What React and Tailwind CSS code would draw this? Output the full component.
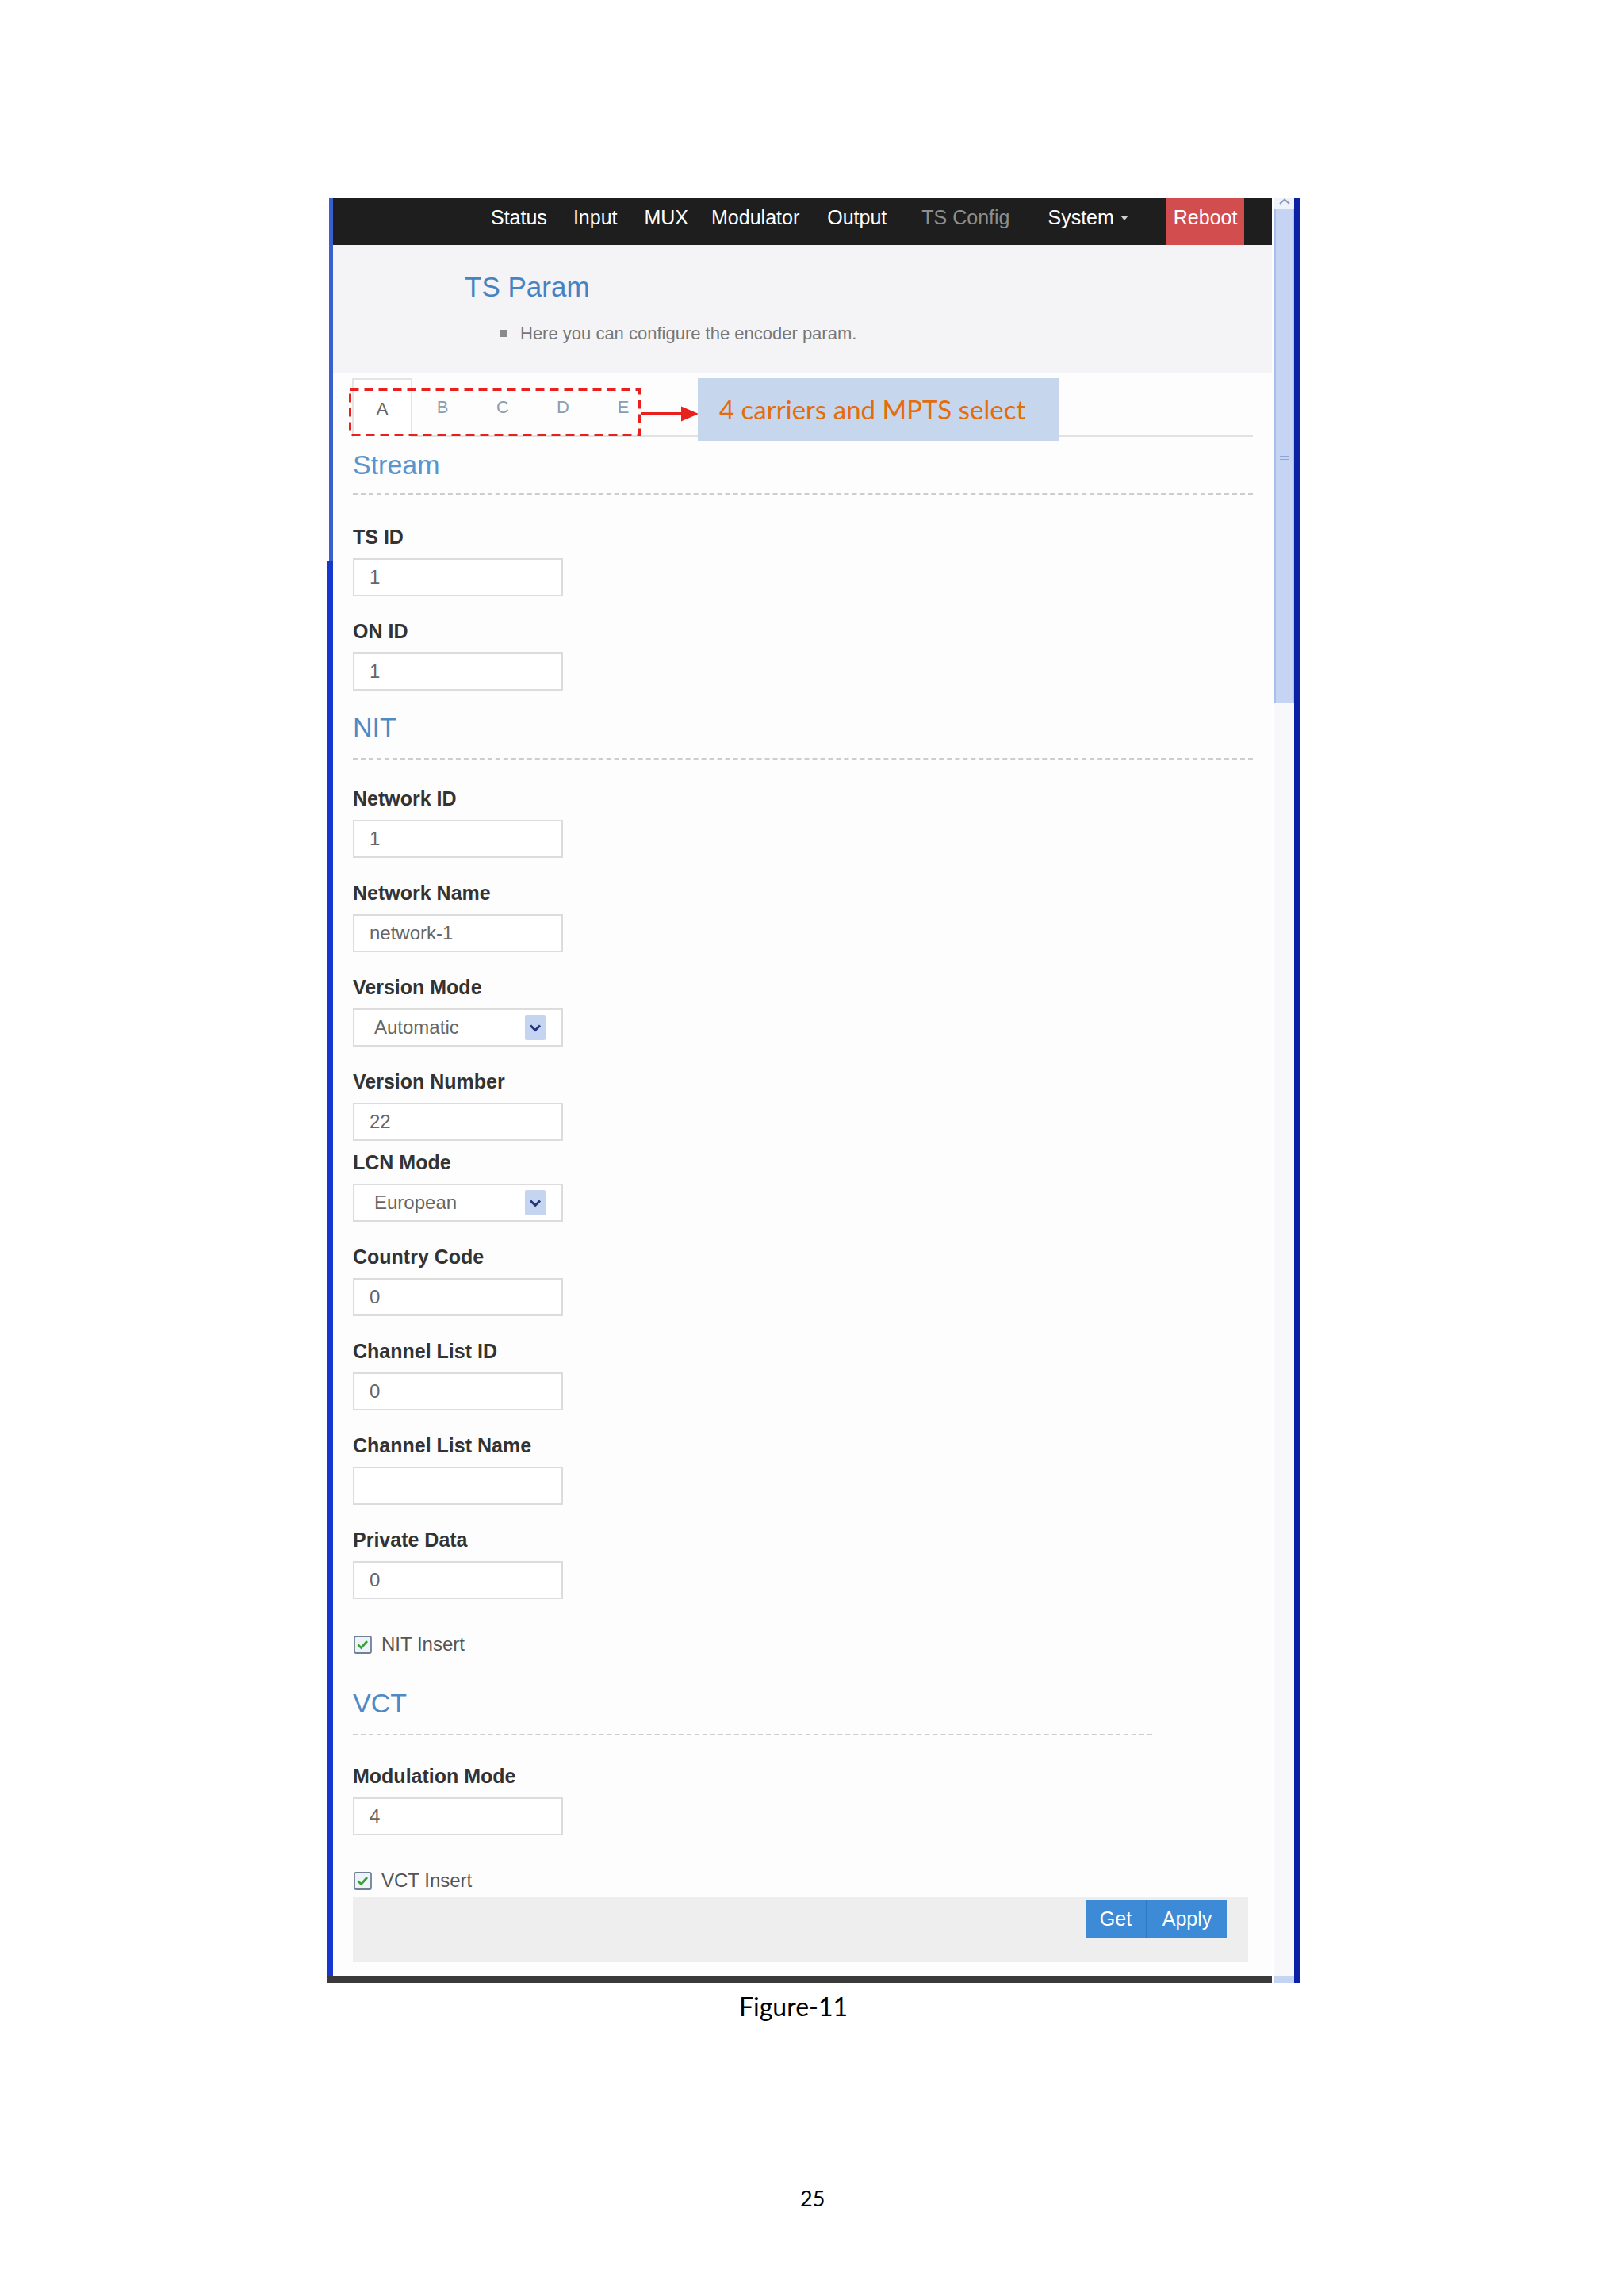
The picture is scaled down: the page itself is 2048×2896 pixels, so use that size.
import React from 'react'

const navItems = [
  { label: 'Status', cls: 'ml-0 text-white' },
  { label: 'Input', cls: 'ml-[33px] text-white' },
  { label: 'MUX', cls: 'ml-[34px] text-white' },
  { label: 'Modulator', cls: 'ml-[29px] text-white' },
  { label: 'Output', cls: 'ml-[35px] text-white' },
  { label: 'TS Config', cls: 'ml-[44px] text-[#8d8d8d]' },
]

function Chevron() {
  return (
    <svg width="16" height="11" viewBox="0 0 16 11">
      <path d="M2 2.5 L8 8.5 L14 2.5" fill="none" stroke="#23357a" strokeWidth="3" />
    </svg>
  )
}

function CheckBox() {
  return (
    <svg width="23" height="23" viewBox="0 0 23 23">
      <rect x="1" y="1" width="21" height="21" rx="2" fill="#eef3f8" stroke="#6f8097" strokeWidth="1.8" />
      <path d="M5.5 11.5 L9.5 15.5 L17 7" fill="none" stroke="#3aa13a" strokeWidth="2.8" />
    </svg>
  )
}

function Field({ label, value, select, gap = 'mb-[29px]' }) {
  return (
    <div className={gap}>
      <div className="h-[30px] text-[25px] leading-[30px] font-bold text-[#333]">{label}</div>
      {select ? (
        <div className="mt-[12px] flex h-[48px] w-[265px] items-center justify-between border-2 border-[#dcdcdc] bg-white pl-[25px] pr-[20px] text-[24px] text-[#666]">
          <span>{value}</span>
          <span className="flex h-[32px] w-[26px] items-center justify-center rounded-[2px] bg-[#c5d4f0]">
            <Chevron />
          </span>
        </div>
      ) : (
        <div className="mt-[12px] flex h-[48px] w-[265px] items-center border-2 border-[#dcdcdc] bg-white pl-[19px] text-[24px] text-[#666]">
          {value}
        </div>
      )}
    </div>
  )
}

function SectionTitle({ children, cls }) {
  return <div className={`h-[40px] text-[34px] leading-[40px] text-[#4d8ac6] ${cls}`}>{children}</div>
}

function Check({ label, cls }) {
  return (
    <div className={`flex h-[30px] items-center gap-[12px] pl-[1px] text-[24px] text-[#555] ${cls}`}>
      <CheckBox />
      <span>{label}</span>
    </div>
  )
}

export default function App() {
  return (
    <div className="relative h-[2896px] w-[2048px] bg-white font-['Liberation_Sans',Arial,sans-serif]">
      <div className="flex pl-[412px] pt-[250px]">
        {/* screenshot frame */}
        <div className="flex w-[1192px] flex-col">
          <div className="flex">
            <div className="flex w-[8px] flex-col">
              <div className="ml-[3px] h-[457px] w-[5px] bg-[#3a5fcf]" />
              <div className="flex-1 bg-[#1637cf]" />
            </div>
            <div className="w-[1184px] bg-[#fdfdfd] pb-[18px]">
              {/* top nav */}
              <div className="flex h-[59px] items-stretch bg-[#1e1e1e] pl-[199px] text-[25px]">
                {navItems.map((n) => (
                  <span key={n.label} className={`flex items-center pb-[10px] ${n.cls}`}>{n.label}</span>
                ))}
                <span className="ml-[48px] flex items-center pb-[10px] text-white">
                  System
                  <svg className="ml-[8px]" width="10" height="6" viewBox="0 0 10 6">
                    <path d="M0 0 H10 L5 6 Z" fill="#cfcfcf" />
                  </svg>
                </span>
                <span className="ml-[48px] flex items-center bg-[#d24d4d] px-[9px] pb-[10px] text-white">Reboot</span>
              </div>

              {/* page header */}
              <div className="h-[162px] bg-[#f4f4f6] pl-[166px] pt-[33px]">
                <div className="h-[40px] text-[35px] leading-[40px] text-[#4583c2]">TS Param</div>
                <div className="mt-[23px] flex h-[30px] items-center pl-[44px] text-[22px] text-[#777]">
                  <span className="mr-[17px] h-[9px] w-[9px] bg-[#8a8a8a]" />
                  Here you can configure the encoder param.
                </div>
              </div>

              <div className="pl-[25px] pr-[24px]">
                {/* tabs */}
                <div className="relative mt-[6px] flex h-[74px] border-b-2 border-[#e2e2e2]">
                  {['A', 'B', 'C', 'D', 'E'].map((t, i) => (
                    <div
                      key={t}
                      className={
                        i === 0
                          ? '-ml-[1px] -mb-[2px] flex w-[76px] items-center justify-center border-2 border-b-0 border-[#e4e4e4] bg-white text-[22px] text-[#666]'
                          : 'flex w-[76px] items-center justify-center text-[22px] text-[#8c9db2]'
                      }
                    >
                      {t}
                    </div>
                  ))}
                  <svg className="absolute left-[-5px] top-[13px]" width="368" height="60" viewBox="0 0 368 60">
                    <rect x="1.5" y="1.5" width="365" height="57" fill="none" stroke="#e8211f" strokeWidth="3" strokeDasharray="11 7" />
                  </svg>
                  <svg className="absolute left-[363px] top-[35px]" width="74" height="20" viewBox="0 0 74 20">
                    <path d="M0 10 H54" stroke="#e8211f" strokeWidth="4" />
                    <path d="M51 0.5 L73 10 L51 19.5 Z" fill="#e8211f" />
                  </svg>
                  <div className="absolute left-[435px] top-0 flex h-[79px] w-[455px] items-center bg-[#c6d6ec] pl-[27px] font-['Lato',sans-serif] text-[33px] text-[#e46c0a]">
                    4 carriers and MPTS select
                  </div>
                </div>

                {/* Stream */}
                <SectionTitle cls="mt-[15px] text-[#5a95cb]">Stream</SectionTitle>
                <div className="mt-[16px] border-t-2 border-dashed border-[#cdcdcd]" />
                <div className="mt-[38px]">
                  <Field label="TS ID" value="1" />
                  <Field label="ON ID" value="1" gap="mb-0" />
                </div>

                {/* NIT */}
                <SectionTitle cls="mt-[26px]">NIT</SectionTitle>
                <div className="mt-[19px] border-t-2 border-dashed border-[#cdcdcd]" />
                <div className="mt-[34px]">
                  <Field label="Network ID" value="1" />
                  <Field label="Network Name" value="network-1" />
                  <Field label="Version Mode" value="Automatic" select />
                  <Field label="Version Number" value="22" gap="mb-[12px]" />
                  <Field label="LCN Mode" value="European" select />
                  <Field label="Country Code" value="0" />
                  <Field label="Channel List ID" value="0" />
                  <Field label="Channel List Name" value="" />
                  <Field label="Private Data" value="0" gap="mb-0" />
                </div>
                <Check label="NIT Insert" cls="mt-[42px]" />

                {/* VCT */}
                <SectionTitle cls="mt-[39px]">VCT</SectionTitle>
                <div className="mt-[19px] w-[1008px] border-t-2 border-dashed border-[#cdcdcd]" />
                <div className="mt-[36px]">
                  <Field label="Modulation Mode" value="4" gap="mb-0" />
                </div>
                <Check label="VCT Insert" cls="mt-[42px]" />

                {/* actions */}
                <div className="mr-[6px] mt-[6px] flex h-[82px] items-start justify-end bg-[#eeeeef] pr-[27px] pt-[4px]">
                  <div className="flex h-[48px] text-[25px] text-white">
                    <span className="flex w-[78px] items-center justify-center border-r-2 border-[#2f77bf] bg-[#3d8bd6]">Get</span>
                    <span className="flex w-[100px] items-center justify-center bg-[#3d8bd6]">Apply</span>
                  </div>
                </div>
              </div>
            </div>
          </div>
          <div className="h-[8px] bg-[#3a3a3a]" />
        </div>

        {/* scrollbar */}
        <div className="ml-[3px] flex w-[25px] flex-col">
          <div className="flex h-[14px] items-start justify-center bg-[#eef2fb]">
            <svg width="14" height="8" viewBox="0 0 14 8">
              <path d="M1 7 L7 1.5 L13 7" fill="none" stroke="#8a98b8" strokeWidth="2" />
            </svg>
          </div>
          <div className="flex h-[623px] items-center justify-center border-x-2 border-[#a9bee9] bg-[#c5d4f3]">
            <div className="flex flex-col gap-[3px]">
              <div className="h-[1px] w-[12px] bg-[#8ea4d6]" />
              <div className="h-[1px] w-[12px] bg-[#8ea4d6]" />
              <div className="h-[1px] w-[12px] bg-[#8ea4d6]" />
            </div>
          </div>
          <div className="flex-1 bg-[#f8f8fa]" />
          <div className="h-[8px] bg-[#c5d4f3]" />
        </div>
        <div className="w-[8px] bg-[#0a21a5]" />
      </div>

      {/* caption */}
      <div className="mt-[10px] h-[40px] pl-[932px] font-['Lato',sans-serif] text-[32px] leading-[40px] text-black">Figure-11</div>
      <div className="mt-[204px] h-[36px] pl-[1009px] font-['Lato',sans-serif] text-[27px] leading-[36px] text-black">25</div>
    </div>
  )
}
